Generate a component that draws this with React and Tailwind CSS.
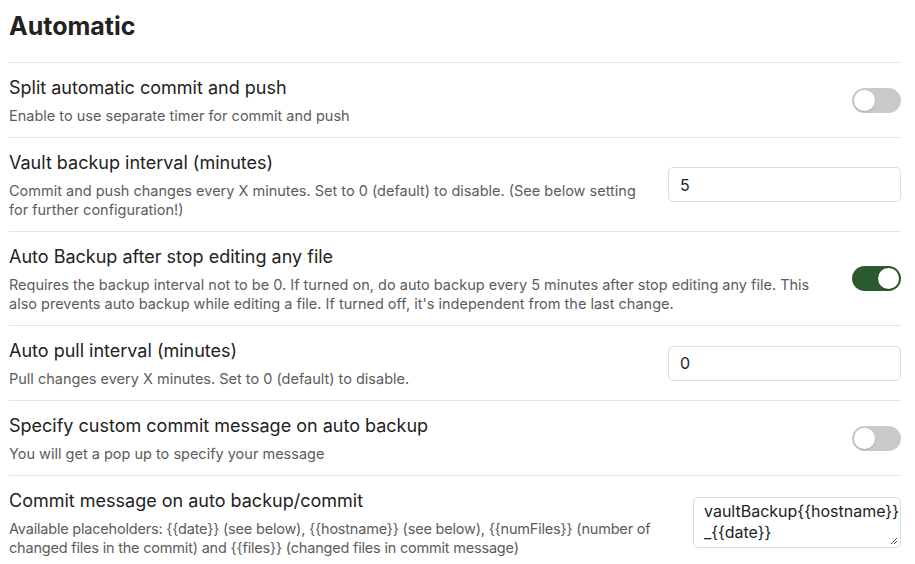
import React from "react";

function Toggle({ on }) {
  return (
    <div
      className={
        "relative w-[49px] h-[25px] rounded-full shrink-0 " +
        (on ? "bg-[#2b5a2e]" : "bg-[#cacaca]")
      }
    >
      <div
        className={
          "absolute top-[2px] w-[21px] h-[21px] rounded-full bg-white shadow-[0_1px_2px_rgba(0,0,0,0.15)] " +
          (on ? "left-[26px]" : "left-[2px]")
        }
      />
    </div>
  );
}

function Row({ name, desc, control, tight }) {
  return (
    <div className="flex items-center border-t border-[#e3e3e3] py-[12px] gap-[24px]">
      <div className="flex-1 min-w-0">
        <div className="text-[18px] leading-[25px] text-[#222222]">{name}</div>
        <div
          className={
            "text-[14.5px] leading-[19px] text-[#5c5c5c] mt-[6px] " +
            (tight ? "tracking-[-0.2px]" : "")
          }
        >
          {desc}
        </div>
      </div>
      <div className="shrink-0 flex justify-end">{control}</div>
    </div>
  );
}

export default function App() {
  return (
    <div
      className="bg-white w-[915px] h-[564px] overflow-hidden pl-[9px] pr-[14px] font-['Inter',sans-serif]"
    >
      <div className="text-[25px] font-bold text-[#222222] leading-[30px] pt-[11px] pb-[21px]">Automatic</div>
      <Row
        name="Split automatic commit and push"
        desc="Enable to use separate timer for commit and push"
        control={<Toggle on={false} />}
      />
      <Row
        name="Vault backup interval (minutes)"
        desc="Commit and push changes every X minutes. Set to 0 (default) to disable. (See below setting for further configuration!)"
        control={
          <div className="w-[233px] h-[35px] border border-[#dcdcdc] rounded-[5px] px-[11px] flex items-center text-[16px] text-[#222222]">
            5
          </div>
        }
      />
      <Row
        name="Auto Backup after stop editing any file"
        desc="Requires the backup interval not to be 0. If turned on, do auto backup every 5 minutes after stop editing any file. This also prevents auto backup while editing a file. If turned off, it's independent from the last change."
        control={<Toggle on={true} />}
      />
      <Row
        name="Auto pull interval (minutes)"
        desc="Pull changes every X minutes. Set to 0 (default) to disable."
        control={
          <div className="w-[233px] h-[35px] border border-[#dcdcdc] rounded-[5px] px-[11px] flex items-center text-[16px] text-[#222222]">
            0
          </div>
        }
      />
      <Row
        name="Specify custom commit message on auto backup"
        desc="You will get a pop up to specify your message"
        control={<Toggle on={false} />}
      />
      <Row
        tight
        name="Commit message on auto backup/commit"
        desc="Available placeholders: {{date}} (see below), {{hostname}} (see below), {{numFiles}} (number of changed files in the commit) and {{files}} (changed files in commit message)"
        control={
          <div className="relative w-[208px] h-[51px] border border-[#dcdcdc] rounded-[5px] px-[10px] pt-[3px] text-[16px] leading-[21px] text-[#222222]">
            vaultBackup{"{{hostname}}"}
            <br />_{"{{date}}"}
            <svg className="absolute right-[2px] bottom-[2px]" width="9" height="9" viewBox="0 0 9 9">
              <path d="M8 2 L2 8 M8 5 L5 8" stroke="#555" strokeWidth="1" />
            </svg>
          </div>
        }
      />
    </div>
  );
}
